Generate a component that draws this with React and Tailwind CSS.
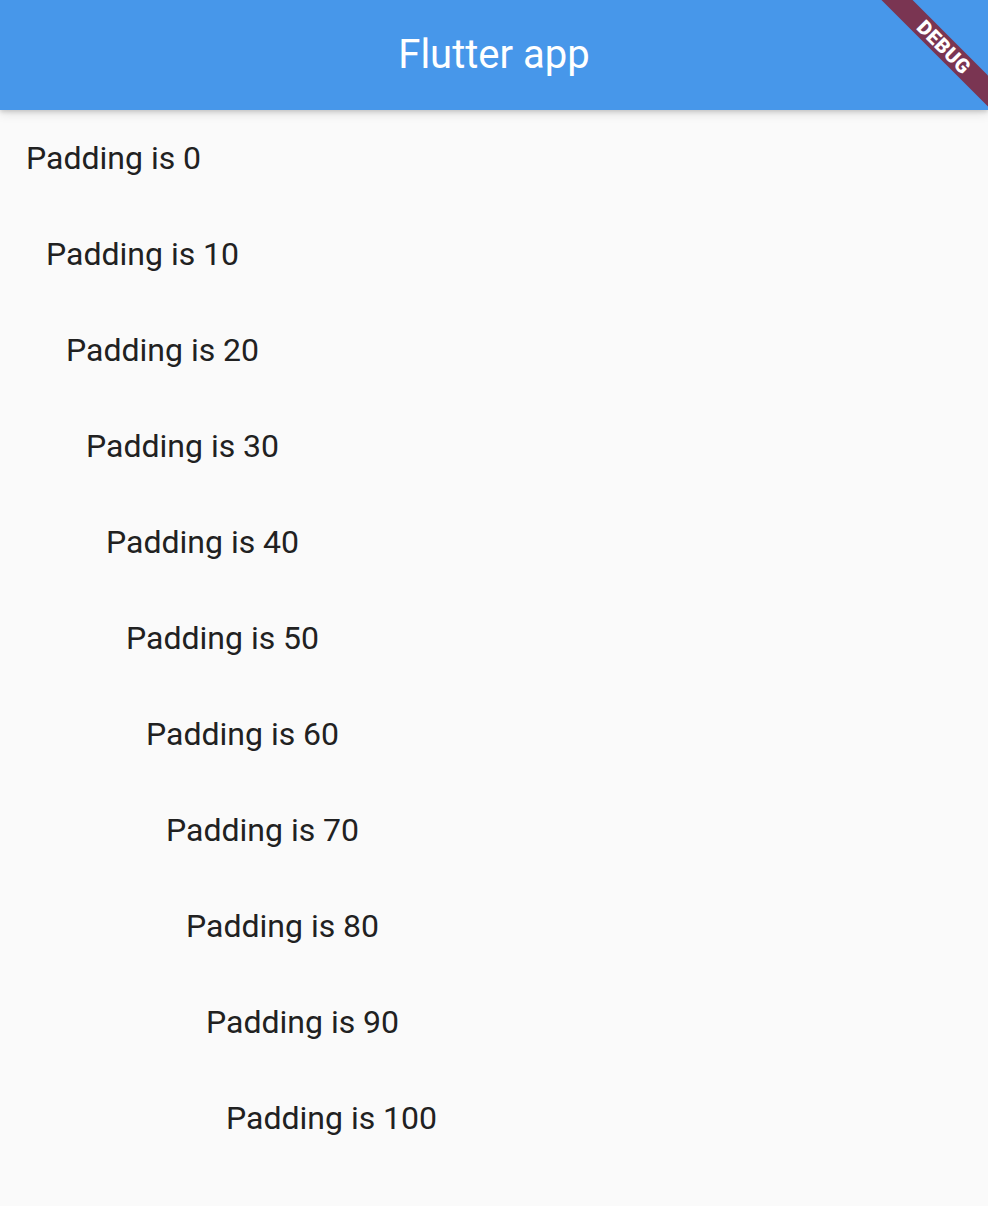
import React from "react";

const paddings = [0, 10, 20, 30, 40, 50, 60, 70, 80, 90, 100];
const padClasses = [
  "pl-[26px]",
  "pl-[46px]",
  "pl-[66px]",
  "pl-[86px]",
  "pl-[106px]",
  "pl-[126px]",
  "pl-[146px]",
  "pl-[166px]",
  "pl-[186px]",
  "pl-[206px]",
  "pl-[226px]",
];

export default function App() {
  return (
    <div
      className="relative w-[988px] h-[1206px] overflow-hidden bg-[#fafafa]"
      style={{ fontFamily: "Roboto, 'Noto Sans', sans-serif" }}
    >
      <header className="relative z-10 h-[110px] bg-[#4797ea] flex items-center justify-center shadow-[0_2px_4px_rgba(0,0,0,0.14),0_4px_10px_rgba(0,0,0,0.10)]">
        <h1 className="text-[40px] leading-none text-white font-normal">Flutter app</h1>
      </header>
      <main className="flex flex-col">
        {paddings.map((p, i) => (
          <div key={p} className={`h-[96px] flex items-center ${padClasses[i]}`}>
            <span className="text-[32px] text-[#212121]">Padding is {p}</span>
          </div>
        ))}
      </main>
      <div className="absolute top-0 right-0 z-20 w-[120px] h-[110px] overflow-hidden pointer-events-none">
        <div className="absolute left-[-24px] top-[36px] w-[200px] h-[22px] rotate-45 bg-[#7a3552] flex items-center justify-center">
          <span className="text-[20px] leading-none font-black text-white tracking-[0.5px]">DEBUG</span>
        </div>
      </div>
    </div>
  );
}
